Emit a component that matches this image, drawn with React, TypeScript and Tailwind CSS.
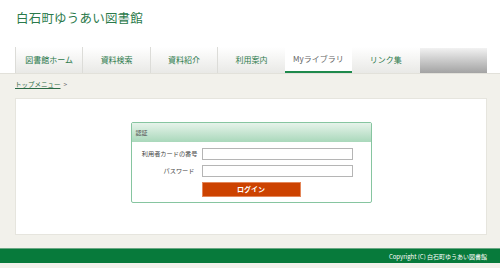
import React from "react";

const font = { fontFamily: '"Noto Sans CJK JP", "Noto Sans", sans-serif' };

const tabs = ["図書館ホーム", "資料検索", "資料紹介", "利用案内", "Myライブラリ", "リンク集"];

export default function App() {
  return (
    <div className="w-[500px] h-[268px] overflow-hidden bg-[#f2f1eb] flex flex-col" style={font}>
      <div className="bg-white">
        <div className="h-[47px] pl-[16px] pt-[9px]">
          <div className="text-[12.5px] leading-[18px] text-[#2b7a4b] tracking-[0.2px]">白石町ゆうあい図書館</div>
        </div>
        <div className="pl-[15px] h-[26px] flex">
          <div className="grid grid-cols-7 w-[472px] h-full">
            {tabs.map((t, i) =>
              t === "Myライブラリ" ? (
                <div
                  key={t}
                  className="flex items-center justify-center bg-white border-b-2 border-[#1f8a4c] text-[8px] text-[#666]"
                >
                  {t}
                </div>
              ) : (
                <div
                  key={t}
                  className={`flex items-center justify-center bg-gradient-to-b from-white to-[#e9e9e6] text-[8px] text-[#2b7a4b] ${i < 4 ? "border-l border-[#dcdcd8]" : ""}`}
                >
                  {t}
                </div>
              )
            )}
            <div className="mt-[1px] bg-gradient-to-b from-[#f2f2f2] to-[#a3a3a3]" />
          </div>
        </div>
      </div>
      <div className="border-t border-[#e2e1da] flex-1 flex flex-col">
        <div className="h-[24px] pl-[15px] pt-[6px] flex items-start">
          <span className="text-[6.5px] leading-[8px] text-[#2b6a45] underline">トップメニュー</span>
          <span className="text-[6.5px] leading-[8px] text-[#666] ml-[3px]">&gt;</span>
        </div>
        <div className="ml-[15px] w-[472px] h-[137px] bg-white border border-[#e6e5de] flex justify-center pt-[23px]">
          <div className="w-[241px] h-[81px] border border-[#86c5a0] rounded-[2px] flex flex-col">
            <div className="h-[19px] bg-gradient-to-b from-[#e6f3ea] to-[#a9d8bb] pl-[4px] flex items-center">
              <span className="text-[6px] leading-[6px] text-[#555]">認証</span>
            </div>
            <div className="pt-[6px] flex flex-col gap-[5px]">
              <div className="flex items-center h-[12px]">
                <div className="w-[66px] text-right text-[6.2px] text-[#444]">利用者カードの番号</div>
                <div className="ml-[4px] w-[151px] h-[12px] border border-[#b5b5b5] bg-white" />
              </div>
              <div className="flex items-center h-[12px]">
                <div className="w-[63px] text-right text-[6.2px] text-[#444]">パスワード</div>
                <div className="ml-[7px] w-[151px] h-[12px] border border-[#b5b5b5] bg-white" />
              </div>
              <div className="flex h-[15px]">
                <div className="ml-[70px] w-[99px] h-[15px] bg-[#cc4200] border border-[#e4875a] flex items-center justify-center text-white font-bold text-[7px]">
                  ログイン
                </div>
              </div>
            </div>
          </div>
        </div>
        <div className="h-[13px]" />
        <div className="h-[15px] bg-[#077a3b] border-t border-[#6aa884] flex items-center justify-end pr-[13px]">
          <span className="text-[6px] text-white">Copyright (C) 白石町ゆうあい図書館</span>
        </div>
      </div>
    </div>
  );
}
